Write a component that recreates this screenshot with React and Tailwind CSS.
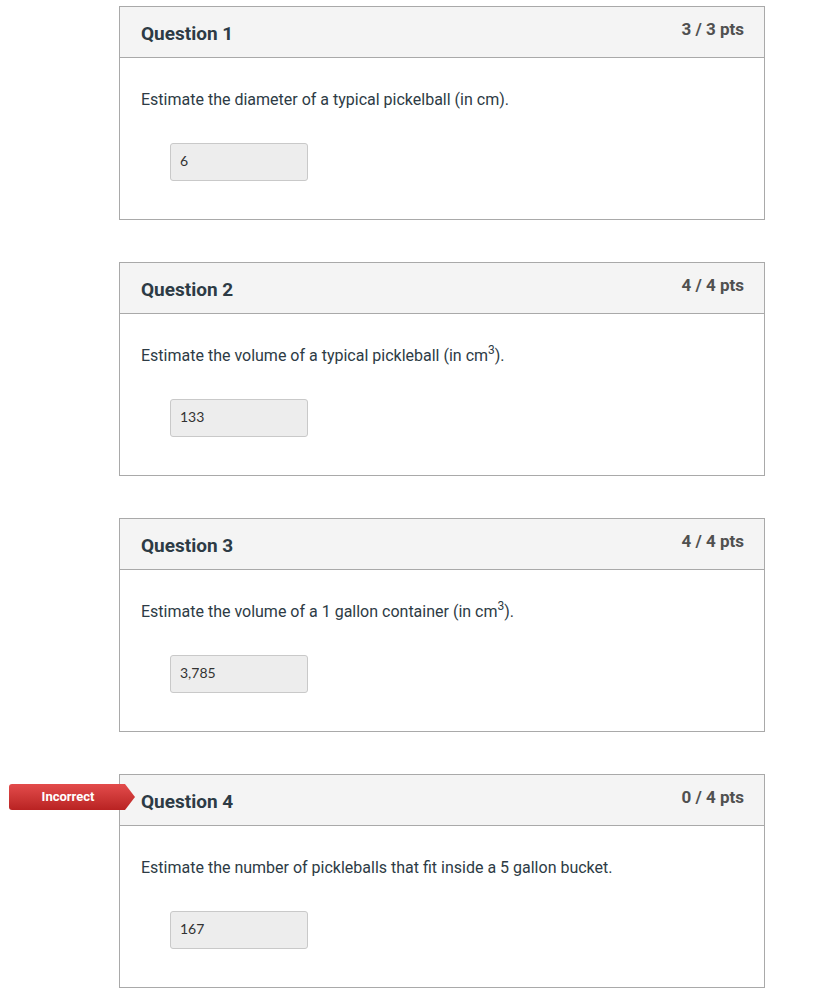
const questions = [
  { n: 1, pts: '3 / 3 pts', text: <>Estimate the diameter of a typical pickelball (in cm).</>, answer: '6' },
  {
    n: 2,
    pts: '4 / 4 pts',
    text: <>Estimate the volume of a typical pickleball (in cm<sup className="top-[-0.55em] text-[12px]">3</sup>).</>,
    answer: '133',
  },
  {
    n: 3,
    pts: '4 / 4 pts',
    text: <>Estimate the volume of a 1 gallon container (in cm<sup className="top-[-0.55em] text-[12px]">3</sup>).</>,
    answer: '3,785',
  },
  {
    n: 4,
    pts: '0 / 4 pts',
    text: <>Estimate the number of pickleballs that fit inside a 5 gallon bucket.</>,
    answer: '167',
    incorrect: true,
  },
];

function QuestionCard({ q }) {
  return (
    <div className="relative w-[646px] border border-[#a9a9a9] bg-white">
      {q.incorrect && (
        <div className="absolute left-[-111px] top-[9px] flex h-[26px] w-[126px] items-center bg-gradient-to-b from-[#e34b4b] to-[#b92222] pr-[10px] rounded-l-[3px] [clip-path:polygon(0_0,calc(100%-10px)_0,100%_50%,calc(100%-10px)_100%,0_100%)]">
          <span className="w-full pl-[2px] text-center text-[13px] font-bold text-white">Incorrect</span>
        </div>
      )}
      <div className="flex h-[51px] justify-between border-b border-[#a9a9a9] bg-[#f4f4f4] pl-[21px] pr-[20px]">
        <h2 className="self-center pt-[4px] text-[19px] font-bold text-[#2d3b45]">Question {q.n}</h2>
        <div className="pt-[10px] text-[17px] font-bold text-[#505050]">{q.pts}</div>
      </div>
      <div className="pl-[21px] pt-[30px] pb-[38px]">
        <p className="h-[24px] text-[16px] leading-[24px] text-[#2d3b45]">{q.text}</p>
        <div className="ml-[29px] mt-[31px] flex h-[38px] w-[138px] items-center rounded-[3px] border border-[#c9c9c9] bg-[#ededed] pb-[3px] pl-[9px] font-['Lato',sans-serif] text-[14px] text-[#333]">
          {q.answer}
        </div>
      </div>
    </div>
  );
}

export default function App() {
  return (
    <div className="min-h-[1001px] bg-white pl-[119px] pt-[6px] font-['Roboto',sans-serif]">
      <div className="flex flex-col gap-[42px]">
        {questions.map((q) => (
          <QuestionCard key={q.n} q={q} />
        ))}
      </div>
    </div>
  );
}
